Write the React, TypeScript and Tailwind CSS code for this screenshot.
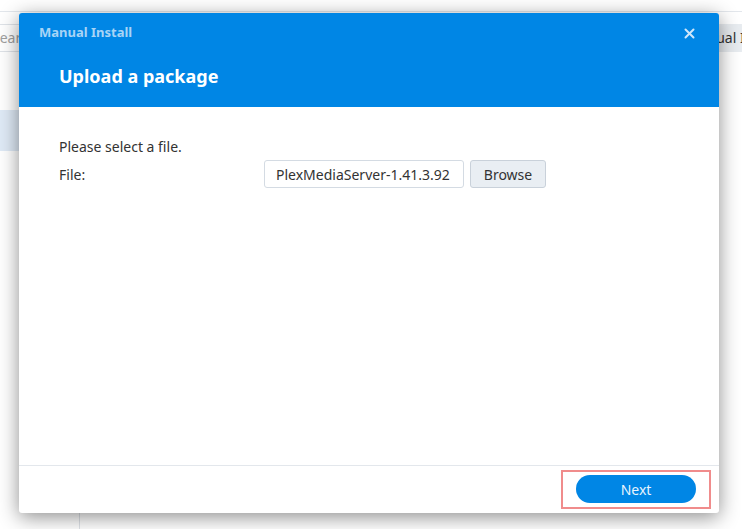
import React from 'react';

const App: React.FC = () => {
  return (
    <div
      className="relative w-[742px] h-[529px] overflow-hidden bg-white text-[14px] text-[#333]"
      style={{ fontFamily: '"Noto Sans", "Open Sans", sans-serif' }}
    >
      {/* background window content */}
      <div className="flex flex-col h-full">
        <div className="h-[12px] border-b border-[#e3e7ec]" />
        <div className="flex items-center h-[46px] pt-[5px]">
          <div className="flex items-center h-[28px] w-[200px] -ml-[9px] border border-[#dfe3e8] rounded-sm text-[#a0a0a0] whitespace-nowrap">
            Search
          </div>
          <div className="flex-1" />
          <div className="flex items-center h-[28px] bg-[#e8ecf0] pl-[8px] w-[110px] -mr-[47px] text-[#333] whitespace-nowrap overflow-hidden">
            Manual Install
          </div>
        </div>
        <div className="flex flex-1">
          <div className="w-[80px] border-r border-[#dfe3e8] pt-[52px]">
            <div className="h-[41px] bg-[#dfeaf6]" />
          </div>
          <div className="flex-1" />
        </div>
      </div>

      {/* dialog */}
      <div className="absolute left-[19px] top-[13px] w-[700px] h-[500px] bg-white rounded-[3px] shadow-[0_4px_20px_rgba(0,0,0,0.45)] flex flex-col overflow-hidden">
        <div className="h-[94px] bg-[#0086e5] flex flex-col px-[20px] pt-[10px]">
          <div className="flex items-center justify-between h-[20px]">
            <span className="text-[13px] font-bold text-[#a8d4f6]">Manual Install</span>
            <svg width="11" height="11" viewBox="0 0 11 11" className="mr-[4px]">
              <path d="M1.5 1.5 L9.5 9.5 M9.5 1.5 L1.5 9.5" stroke="#cfe7fb" strokeWidth="2" strokeLinecap="round" />
            </svg>
          </div>
          <div className="mt-[21px] pl-[20px] text-[18px] font-bold text-white leading-[24px]">
            Upload a package
          </div>
        </div>

        <div className="flex-1 px-[40px] pt-[31px]">
          <div className="leading-[18px]">Please select a file.</div>
          <div className="flex items-center mt-[4px]">
            <div className="w-[205px]">File:</div>
            <div className="flex items-center w-[200px] h-[28px] border border-[#d4dbe3] rounded-[3px] px-[11px] overflow-hidden whitespace-nowrap">
              PlexMediaServer-1.41.3.92
            </div>
            <div className="ml-[6px] flex items-center justify-center w-[76px] h-[28px] bg-[#e9eef3] border border-[#c9d1da] rounded-[3px]">
              Browse
            </div>
          </div>
        </div>

        <div className="h-[48px] border-t border-[#e3e7ec] flex items-center justify-end pr-[8px]">
          <div className="flex items-center justify-center w-[150px] h-[39px] border-2 border-[#f08c8c] -mt-[1px]">
            <div className="flex items-center justify-center w-[120px] h-[28px] rounded-full bg-[#0086e5] text-[#e8f4fe]">
              Next
            </div>
          </div>
        </div>
      </div>
    </div>
  );
};

export default App;
